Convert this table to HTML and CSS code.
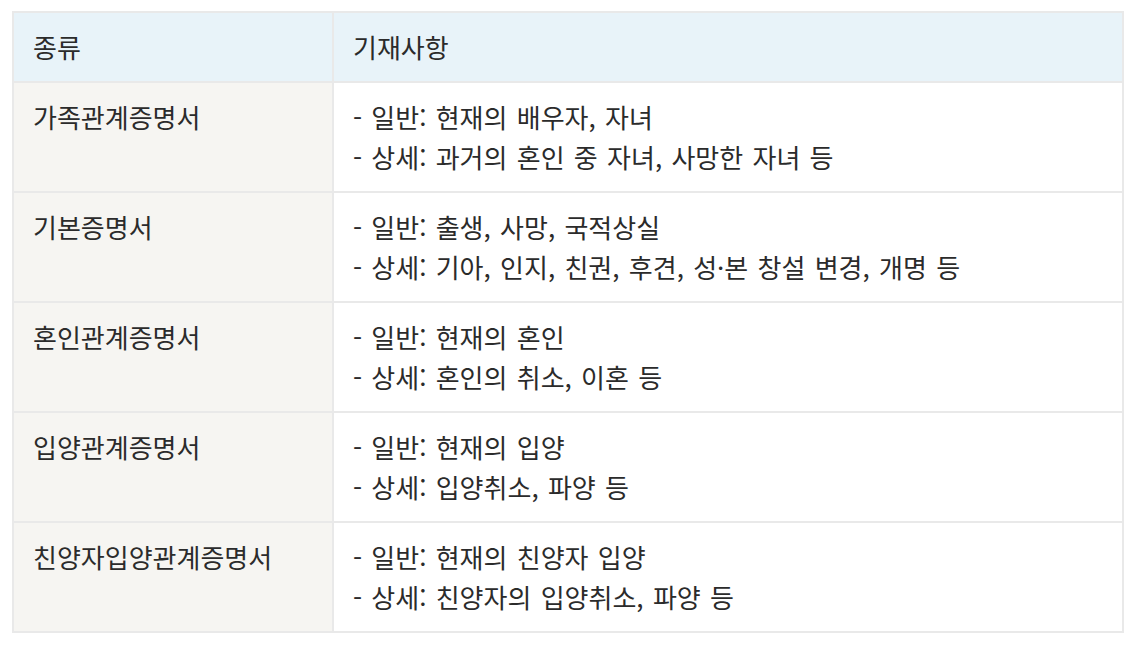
FILE: index.html
```html
<!DOCTYPE html>
<html lang="ko">
<head>
<meta charset="utf-8">
<title>증명서 종류</title>
<link rel="stylesheet" href="styles.css">
</head>
<body>
<div class="wrap">
<table class="cert">
  <colgroup><col class="c1"><col class="c2"></colgroup>
  <thead>
    <tr><th>종류</th><th>기재사항</th></tr>
  </thead>
  <tbody>
    <tr><th>가족관계증명서</th><td>- 일반: 현재의 배우자, 자녀<br>- 상세: 과거의 혼인 중 자녀, 사망한 자녀 등</td></tr>
    <tr><th>기본증명서</th><td>- 일반: 출생, 사망, 국적상실<br>- 상세: 기아, 인지, 친권, 후견, 성·본 창설 변경, 개명 등</td></tr>
    <tr><th>혼인관계증명서</th><td>- 일반: 현재의 혼인<br>- 상세: 혼인의 취소, 이혼 등</td></tr>
    <tr><th>입양관계증명서</th><td>- 일반: 현재의 입양<br>- 상세: 입양취소, 파양 등</td></tr>
    <tr><th>친양자입양관계증명서</th><td>- 일반: 현재의 친양자 입양<br>- 상세: 친양자의 입양취소, 파양 등</td></tr>
  </tbody>
</table>
</div>
</body>
</html>
```

FILE: styles.css
```css
html, body {
  margin: 0;
  padding: 0;
  background: #ffffff;
}
.wrap {
  padding: 11px 10px 0 12px;
}
.cert {
  width: 100%;
  border-collapse: collapse;
  table-layout: fixed;
  font-family: "Noto Sans CJK KR", "Noto Sans", sans-serif;
  font-size: 26px;
  line-height: 40px;
  color: #2b2b2b;
  border: 2px solid #e9e9e9;
}
.cert .c1 { width: 320px; }
.cert th, .cert td {
  border: 2px solid #e9e9e9;
  padding: 14px 19px;
  text-align: left;
  vertical-align: top;
  font-weight: 400;
}
.cert thead th {
  background: #e8f3f9;
}
.cert tbody th {
  background: #f6f5f2;
}
.cert tbody td {
  background: #ffffff;
  word-spacing: 2px;
}
```
